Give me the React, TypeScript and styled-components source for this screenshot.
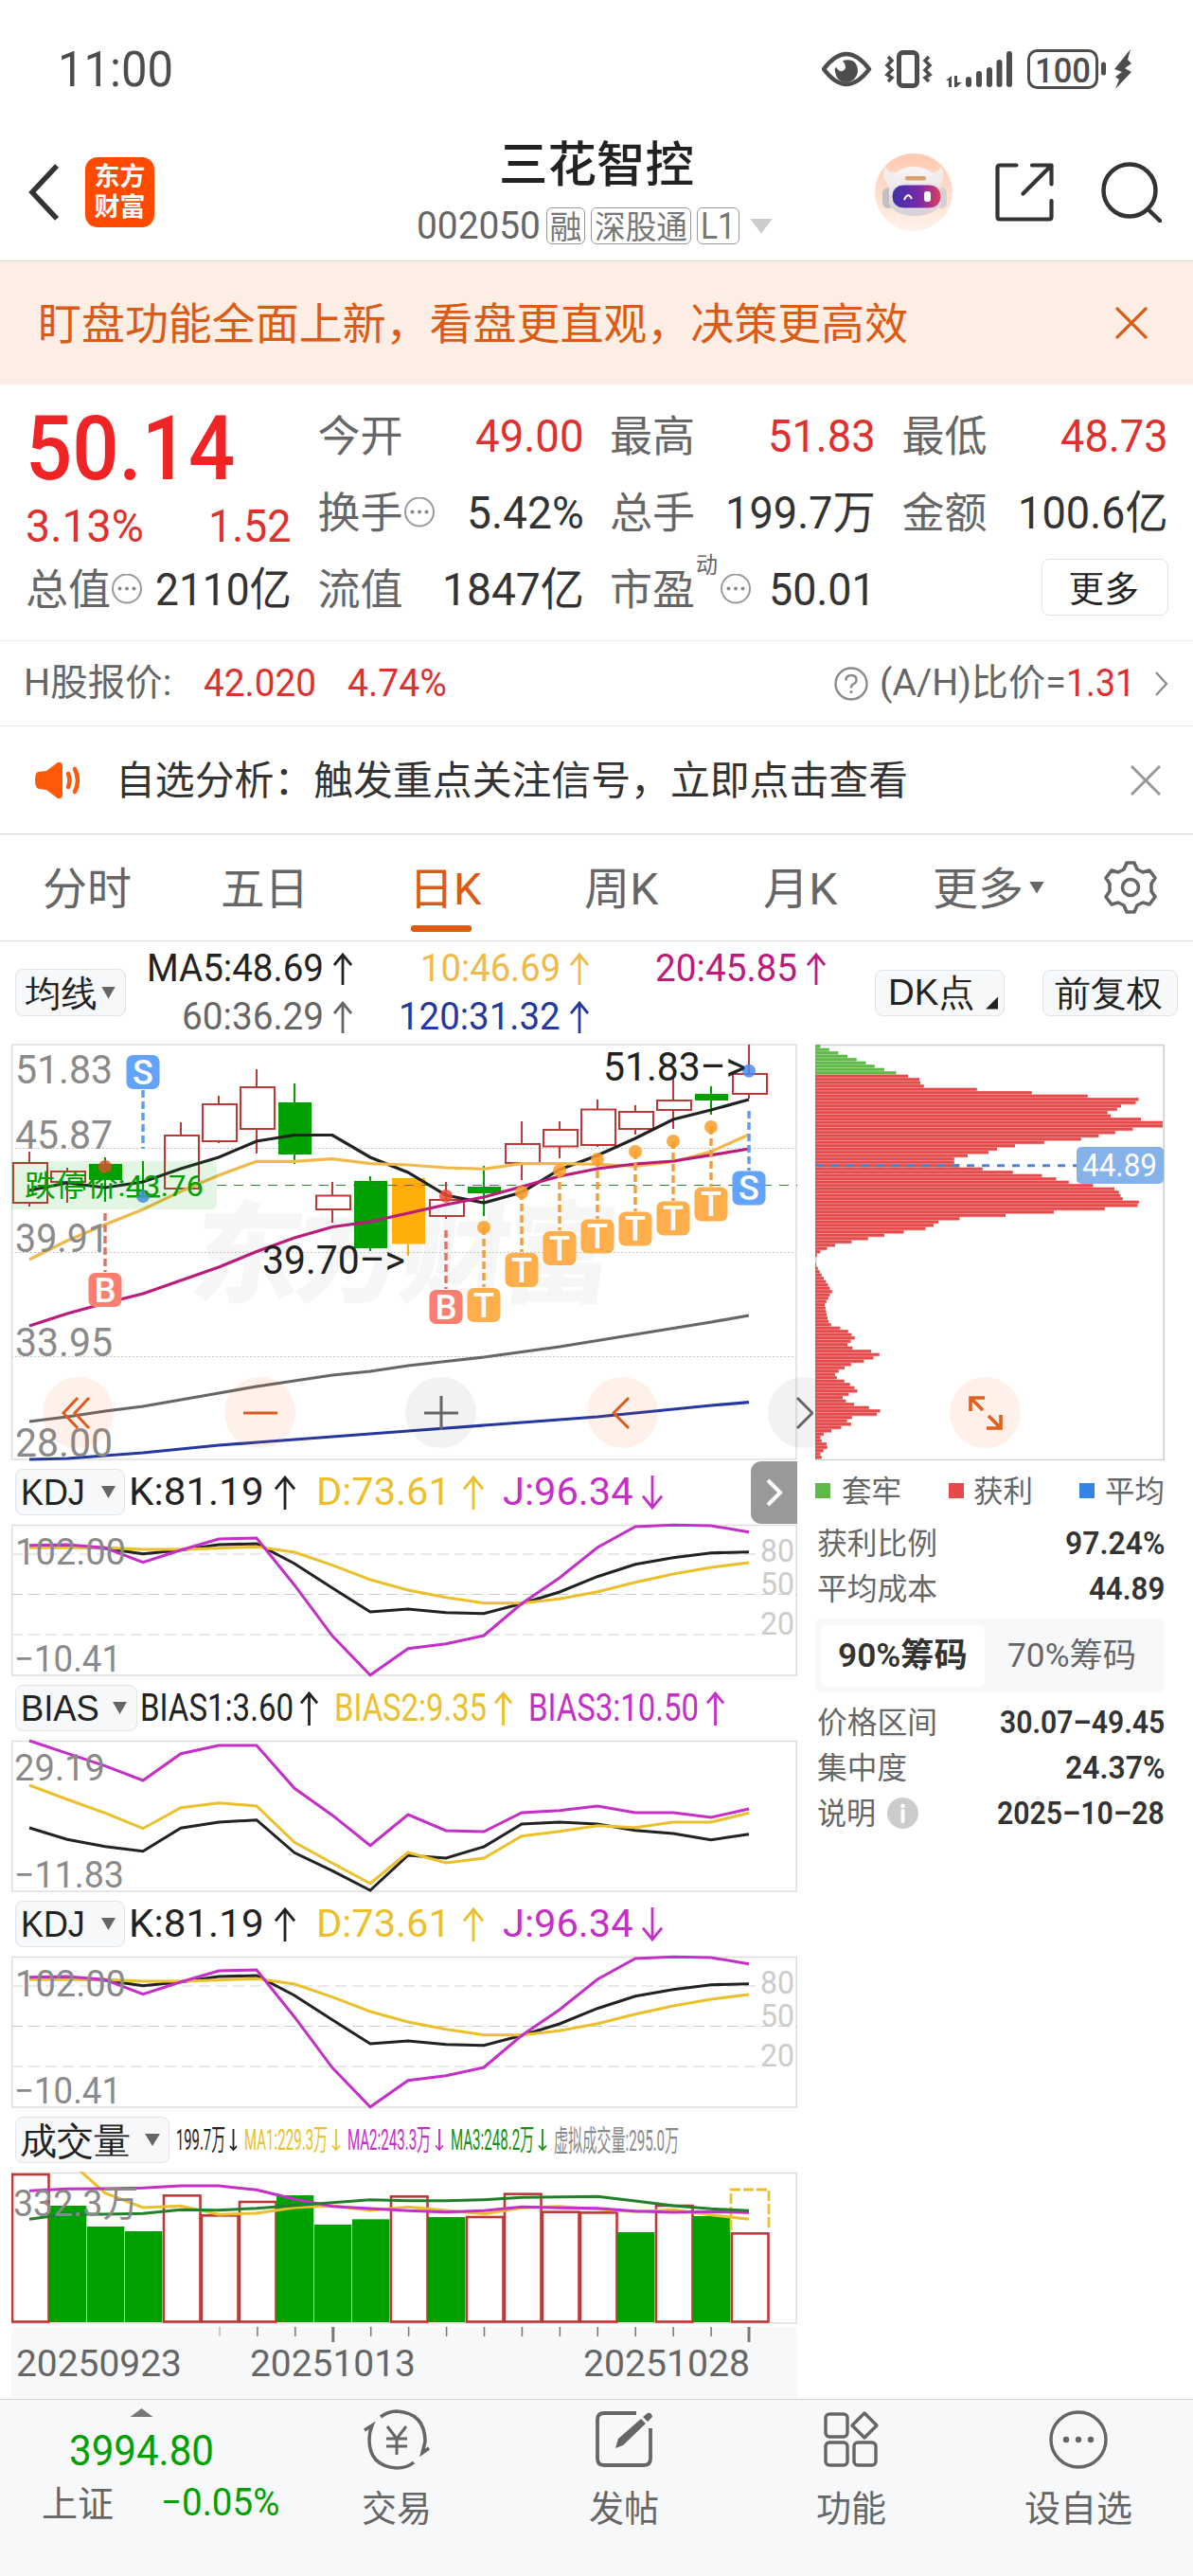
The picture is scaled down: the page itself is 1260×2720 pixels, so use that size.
// App.tsx
import React, { useLayoutEffect, useRef, useState } from 'react';
import styled, { createGlobalStyle } from 'styled-components';

const GlobalStyle = createGlobalStyle`
  body {
    margin: 0;
    background: #fff;
    font-family: Roboto, "Noto Sans CJK SC", sans-serif;
    color: #333;
  }

  svg {
    display: block;
    flex: none;
  }
`;

const RED = '#df3030';
const GREEN = '#00a000';
const ORANGE = '#dc5a14';
const GOLD = '#ebc02c';
const PURPLE = '#c42fc8';
const GRAY = '#666';

// ---------- text that is squeezed or stretched into a fixed width ----------

const FitBox = styled.span<{ $w: number; $s: number; $c?: string; $b?: number; $ml?: number }>`
  display: block;
  flex: none;
  width: ${(p) => p.$w}px;
  margin-left: ${(p) => p.$ml || 0}px;
  font-size: ${(p) => p.$s}px;
  font-weight: ${(p) => p.$b || 400};
  color: ${(p) => p.$c || '#333'};
  line-height: 1;
  white-space: nowrap;
`;

const FitInner = styled.span`
  display: inline-block;
  vertical-align: top;
  transform-origin: 0 50%;
`;

type FitProps = { w: number; s: number; c?: string; b?: number; ml?: number; children: string };

const Fit = ({ w, s, c, b, ml, children }: FitProps) => {
  const ref = useRef<HTMLSpanElement>(null);
  const [k, setK] = useState(1);
  // CJK glyphs sit a little higher on the Latin baseline
  const dy = /^[\u3000-\uffef]/.test(children) ? s * 0.03 : 0;

  useLayoutEffect(() => {
    if (ref.current) setK(w / ref.current.offsetWidth);
  }, [w, children]);

  return (
    <FitBox $w={w} $s={s} $c={c} $b={b} $ml={ml}>
      <FitInner ref={ref} style={{ transform: `translateY(${dy}px) scaleX(${k})` }}>{children}</FitInner>
    </FitBox>
  );
};

// ---------- layout ----------

const Page = styled.div`
  width: 1260px;
  height: 2720px;
  overflow: hidden;
  display: flex;
  flex-direction: column;
`;

const Row = styled.div<{ $h: number; $line?: string; $bg?: string }>`
  display: flex;
  flex: none;
  align-items: center;
  box-sizing: border-box;
  height: ${(p) => p.$h}px;
  background: ${(p) => p.$bg || 'transparent'};
  border-bottom: ${(p) => (p.$line ? `1px solid ${p.$line}` : 'none')};
`;

const StatusIcons = styled.div`
  display: flex;
  align-items: center;
  margin-left: 685px;
`;

const Header = styled(Row)`
  padding: 0 0 16px 30px;
`;

const Logo = styled.div`
  display: flex;
  flex-direction: column;
  align-items: center;
  justify-content: center;
  gap: 5px;
  width: 73px;
  height: 74px;
  margin-left: 28px;
  border-radius: 13px;
  background: #ff4a00;
`;

const TitleBlock = styled.div`
  display: flex;
  flex-direction: column;
  align-items: center;
  gap: 21px;
  width: 380px;
  margin: 0 104px 0 277px;
`;

const CodeRow = styled.div`
  display: flex;
  align-items: center;
  align-self: flex-start;
`;

const Tag = styled.span<{ $w: number }>`
  display: flex;
  align-items: center;
  justify-content: center;
  box-sizing: border-box;
  width: ${(p) => p.$w}px;
  height: 39px;
  margin-left: 6px;
  border: 1.5px solid #999;
  border-radius: 6px;
`;

const HeaderIcon = styled.div<{ $ml: number }>`
  margin-left: ${(p) => p.$ml}px;
`;

const Caret = styled.i<{ $w: number; $h: number; $c?: string; $ml?: number }>`
  width: ${(p) => p.$w}px;
  height: ${(p) => p.$h}px;
  margin-left: ${(p) => p.$ml || 0}px;
  background: ${(p) => p.$c || GRAY};
  clip-path: polygon(0 0, 100% 0, 50% 100%);
`;

const CaretUp = styled(Caret)`
  clip-path: polygon(50% 0, 100% 100%, 0 100%);
`;

const Quote = styled.div`
  display: grid;
  flex: none;
  box-sizing: border-box;
  height: 271px;
  padding: 14px 0 0 27px;
  grid-template-columns: repeat(4, 281px);
  grid-template-rows: repeat(3, 81px);
  column-gap: 27.5px;
  border-bottom: 1px solid #e9e9e9;
`;

const Price = styled.div`
  grid-row: span 2;
  padding-top: 6px;
`;

const Change = styled.div`
  display: flex;
  justify-content: space-between;
  margin-top: 11px;
`;

const Stat = styled.div`
  display: flex;
  align-items: center;
  justify-content: space-between;
`;

const StatLabel = styled.div`
  display: flex;
  align-items: center;
`;

const Superscript = styled.div`
  align-self: flex-start;
  margin: -16px 2px 0 1px;
`;

const MoreButton = styled.button`
  display: flex;
  align-items: center;
  justify-content: center;
  width: 134px;
  height: 60px;
  margin: 0 0 5px auto;
  border: 1.5px solid #e2e2e2;
  border-radius: 8px;
  background: #fff;
`;

const Tab = styled.div<{ $gap: number; $active?: boolean }>`
  position: relative;
  display: flex;
  align-items: center;
  height: 100%;
  margin-left: ${(p) => p.$gap}px;

  &::after {
    content: '';
    position: absolute;
    left: 2px;
    bottom: 9px;
    width: 64px;
    height: 7px;
    border-radius: 3px;
    background: ${(p) => (p.$active ? '#e05a10' : 'transparent')};
  }
`;

const PillButton = styled.button<{ $w: number; $h?: number }>`
  position: relative;
  display: flex;
  flex: none;
  align-items: center;
  box-sizing: border-box;
  width: ${(p) => p.$w}px;
  height: ${(p) => p.$h || 49}px;
  padding: 0;
  border: 1.5px solid #e1e4e8;
  border-radius: 8px;
  background: #f7f8fa;
`;

const Corner = styled.i`
  position: absolute;
  right: 6px;
  bottom: 6px;
  width: 13px;
  height: 13px;
  background: #222;
  clip-path: polygon(100% 0, 100% 100%, 0 100%);
`;

const MaGrid = styled.div`
  display: grid;
  grid-template-columns: 239px 250px 250px;
  grid-template-rows: 51px 51px;
  margin-right: 52px;
`;

const Value = styled.div<{ $ml?: number }>`
  display: flex;
  align-items: center;
  justify-content: flex-end;
  margin-left: ${(p) => p.$ml || 0}px;
`;

const Charts = styled.div`
  display: flex;
  flex: none;
  height: 1431px;
`;

const ChartColumn = styled.div`
  width: 830px;
  margin-left: 12px;
`;

const KLine = styled.div`
  position: relative;
  height: 440px;
`;

const RoundButton = styled.button<{ $x: number; $gray?: boolean }>`
  position: absolute;
  top: 352px;
  left: ${(p) => p.$x}px;
  display: flex;
  align-items: center;
  justify-content: center;
  width: 75px;
  height: 75px;
  padding: 0;
  border: none;
  border-radius: 50%;
  background: ${(p) => (p.$gray ? 'rgba(0,0,0,.05)' : 'rgba(255,90,10,.09)')};
`;

const IndicatorBar = styled.div`
  display: flex;
  align-items: center;
  height: 67px;
  padding-left: 4px;
`;

const FoldButton = styled.button`
  display: flex;
  align-items: center;
  justify-content: center;
  width: 49px;
  height: 66px;
  margin-left: auto;
  padding: 0;
  border: none;
  border-radius: 11px 0 0 11px;
  background: #999;
`;

const Axis = styled.div`
  height: 76px;
  margin-top: 3px;
  background: #f7f8fa;
`;

const ChipColumn = styled.div`
  position: relative;
  width: 369px;
  margin-left: 19px;
`;

const Legend = styled.div`
  display: flex;
  align-items: center;
  justify-content: space-between;
  height: 63px;
`;

const LegendItem = styled.div<{ $c: string }>`
  display: flex;
  align-items: center;

  &::before {
    content: '';
    width: 16px;
    height: 16px;
    background: ${(p) => p.$c};
  }
`;

const InfoRow = styled.div`
  display: flex;
  align-items: center;
  justify-content: space-between;
  height: 48px;
  padding-left: 2px;
`;

const InfoLabel = styled.div`
  display: flex;
  align-items: center;
  gap: 12px;
`;

const Toggle = styled.div`
  display: flex;
  align-items: center;
  box-sizing: border-box;
  height: 78px;
  margin: 8px 0 7px;
  padding: 0 6px;
  border-radius: 7px;
  background: #f7f8fa;
`;

const ToggleItem = styled.div<{ $active?: boolean }>`
  display: flex;
  align-items: center;
  justify-content: center;
  width: ${(p) => (p.$active ? 173 : 183)}px;
  height: 65px;
  border-radius: 6px;
  background: ${(p) => (p.$active ? '#fff' : 'transparent')};
`;

const BottomBar = styled.div`
  display: flex;
  flex: 1;
  border-top: 1px solid #d2d4d6;
  background: #f7f8fa;
`;

const IndexCell = styled.div`
  display: flex;
  flex-direction: column;
  align-items: center;
  width: 299px;
  padding-top: 9px;
`;

const IndexLine = styled.div<{ $mt: number; $ml?: number }>`
  display: flex;
  align-items: center;
  margin-top: ${(p) => p.$mt}px;
  margin-left: ${(p) => p.$ml || 0}px;
`;

const NavItem = styled.div`
  display: flex;
  flex-direction: column;
  align-items: center;
  gap: 21px;
  width: 240px;
  padding-top: 10px;
`;

// ---------- icons ----------

const Arrow = ({ c, w = 20, h = 34, down }: { c: string; w?: number; h?: number; down?: boolean }) => (
  <svg width={w} height={h} viewBox={`0 0 ${w} ${h}`} fill="none" stroke={c} strokeWidth={w < 14 ? 1.8 : 2.8}>
    <g transform={down ? `rotate(180 ${w / 2} ${h / 2})` : undefined}>
      <path d={`M${w / 2} ${h}V2M1 ${w * 0.65}L${w / 2} 2L${w - 1} ${w * 0.65}`} />
    </g>
  </svg>
);

const Cross = ({ c, s, sw }: { c: string; s: number; sw: number }) => (
  <svg width={s} height={s} viewBox={`0 0 ${s} ${s}`} stroke={c} strokeWidth={sw}>
    <path d={`M1 1L${s - 1} ${s - 1}M${s - 1} 1L1 ${s - 1}`} />
  </svg>
);

const Dots = () => (
  <svg width="34" height="34" viewBox="0 0 34 34">
    <circle cx="17" cy="15.500" r="15" fill="none" stroke="#999" strokeWidth="2" />
    <g fill="#888"><circle cx="9.500" cy="15.500" r="2" /><circle cx="17" cy="15.500" r="2" /><circle cx="24.500" cy="15.500" r="2" /></g>
  </svg>
);

const StatusSvg = () => (
  <svg width="330" height="46" viewBox="868 49 330 46" fill="none" stroke="#4d4d4d">
    <path d="M870 72Q894 40 918 72Q894 104 870 72Z" strokeWidth="4.5" strokeLinejoin="round" />
    <path d="M890 63Q899 61 903 65Q906 69 906 75Q904 85 894 86Q884 86 882 75Q881 71 883 70Q886 75 890 74Q896 71 890 63Z" fill="#4d4d4d" stroke="none" />
    <rect x="949.5" y="54.5" width="19" height="35" rx="4" strokeWidth="5" />
    <path d="M938 59L942 63L937 68L942 73L937 78L942 81L938 85M981 59L977 63L982 68L977 73L982 78L977 81L981 85" strokeWidth="3.500" />
    <path d="M999 84L1005 79V91H1002V84ZM1008 79H1011V86H1016L1010 91H1008Z" fill="#4d4d4d" stroke="none" />
    <path d="M1023 83V88M1034 77V88M1045 73V88M1055.500 65V88M1066 56V88" strokeWidth="6" strokeLinecap="round" />
    <rect x="1086.500" y="52.500" width="72" height="39" rx="9" strokeWidth="3" />
    <path d="M1165.500 67V76" strokeWidth="5" strokeLinecap="round" />
    <path d="M1194 51L1177 72L1185 75L1178 80L1182 83L1178 93L1195 75L1188 71L1195 66L1191 62Z" fill="#4d4d4d" stroke="none" />
    <text x="1093" y="86" fontSize="37" fontWeight="500" textLength="59" lengthAdjust="spacingAndGlyphs" fill="#4d4d4d" stroke="none">100</text>
  </svg>
);

const Robot = () => (
  <svg width="82" height="82" viewBox="0 0 82 82">
    <defs>
      <linearGradient id="halo" x2="0" y2="1"><stop offset="0" stopColor="#ffc9ae" /><stop offset="1" stopColor="#fff3ec" /></linearGradient>
      <linearGradient id="visor"><stop offset="0" stopColor="#3a34a8" /><stop offset=".55" stopColor="#7a28a8" /><stop offset="1" stopColor="#e0405c" /></linearGradient>
      <linearGradient id="shell" x2="0" y2="1"><stop offset="0" stopColor="#fbf7f6" /><stop offset="1" stopColor="#d6cfd4" /></linearGradient>
    </defs>
    <circle cx="41" cy="41" r="41" fill="url(#halo)" />
    <path d="M11 14Q6 26 15 34L25 20Q15 22 11 14ZM70 14Q76 26 67 34L56 20Q67 22 70 14Z" fill="#f2edec" />
    <rect x="8" y="36" width="12" height="22" rx="6" fill="#c4bfc4" />
    <rect x="65" y="36" width="11" height="22" rx="5" fill="#d6d0d3" />
    <path d="M15 38Q16 15 41 14Q66 15 69 38L70 52Q66 65 42 66Q18 65 15 52Z" fill="url(#shell)" />
    <rect x="32" y="24" width="22" height="4.500" rx="2" fill="#dba06c" />
    <rect x="18" y="33" width="52" height="25" rx="12" fill="url(#visor)" stroke="#e9dff0" strokeWidth="1" />
    <path d="M31 49Q35 40 39 48" fill="none" stroke="#fff" strokeWidth="2" />
    <rect x="52" y="40" width="7" height="11" rx="3" fill="#fff" />
  </svg>
);

const ShareIcon = () => (
  <svg width="62" height="62" viewBox="0 0 62 62" fill="none" stroke="#333" strokeWidth="4.200" strokeLinecap="round" strokeLinejoin="round">
    <path d="M22.500 2.500H5Q2.500 2.500 2.500 5V57Q2.500 59.500 5 59.500H57Q59.500 59.500 59.500 57V40" />
    <path d="M39 2.500H59.500V22.500M59 3L29.500 32.500" />
  </svg>
);

const SearchIcon = () => (
  <svg width="64" height="64" viewBox="0 0 64 64" fill="none" stroke="#333" strokeWidth="4.500" strokeLinecap="round">
    <circle cx="30" cy="30" r="27.500" />
    <path d="M49.500 50L62 62" />
  </svg>
);

const GearIcon = () => (
  <svg width="58" height="58" viewBox="0 0 58 58" fill="none" stroke={GRAY} strokeWidth="3.600" strokeLinejoin="round">
    <path d="M25 3H33L36 10L42 13L49 11L55 19L51 25V33L55 39L49 47L42 45L36 48L33 55H25L22 48L16 45L9 47L3 39L7 33V25L3 19L9 11L16 13L22 10Z" />
    <circle cx="29" cy="29" r="8.500" />
  </svg>
);

// ---------- chart data ----------

type Candle = [kind: 'up' | 'down' | 'mark', high: number, top: number, bottom: number, low: number];

const candles: Candle[] = [
  ['up', 1216, 1228, 1270, 1274], ['up', 1233, 1237, 1248, 1270], ['down', 1222, 1229, 1246, 1269],
  ['down', 1226, 1262, 1264.5, 1264], ['up', 1185, 1199, 1255, 1255], ['up', 1157, 1166, 1205, 1207],
  ['up', 1129, 1148, 1192, 1218], ['down', 1144, 1164, 1219, 1229], ['up', 1248, 1262.5, 1277, 1291],
  ['down', 1242, 1247, 1318, 1321], ['mark', 1244, 1244, 1313.5, 1326], ['up', 1248, 1267, 1284, 1287],
  ['down', 1231, 1253, 1260, 1284], ['up', 1184, 1208, 1228, 1246], ['up', 1184, 1193, 1210.5, 1223],
  ['up', 1161, 1171.5, 1209, 1211], ['up', 1167, 1174, 1192, 1198], ['up', 1137, 1162, 1172, 1192],
  ['down', 1147, 1155, 1162, 1177], ['up', 1103, 1134, 1155, 1160],
];

const ma5 = [1257, 1249, 1254, 1248, 1234, 1222, 1205, 1198.5, 1198.5, 1222, 1238, 1262, 1270, 1259, 1235, 1220, 1202, 1182, 1172, 1161];
const ma10 = [1330, 1310, 1293, 1277, 1258, 1241, 1226.3, 1226.3, 1223.7, 1228.7, 1230, 1233, 1234.3, 1228.7, 1228.7, 1229.3, 1231.5, 1226.7, 1216, 1198];
const ma20 = [1400, 1387, 1376, 1366, 1352, 1338, 1321.5, 1307, 1295.5, 1290, 1281, 1272, 1264, 1253, 1242, 1234, 1229, 1226, 1219.7, 1213];
const ma60 = [1501, 1496, 1490, 1485, 1478, 1471, 1464, 1458, 1452, 1448, 1442, 1437.5, 1433, 1427.5, 1422, 1415.5, 1409, 1402.5, 1396, 1389];
const ma120 = [1541, 1540, 1537, 1534, 1530, 1526, 1523, 1520, 1517, 1514, 1511, 1508, 1505, 1502, 1499, 1496, 1492, 1488, 1484, 1480.7];

const badges = [
  { i: 2, t: 'B', c: '#fa7f70', y: 1344, from: 1281, to: 1343, dot: 1232 },
  { i: 3, t: 'S', c: '#62a3fb', y: 1114, from: 1151, to: 1213, dot: 1263 },
  { i: 11, t: 'B', c: '#fa7f70', y: 1362, from: 1299, to: 1361, dot: 1263 },
  { i: 12, t: 'T', c: '#ffae4c', y: 1360, from: 1296, to: 1359, dot: 1296 },
  { i: 13, t: 'T', c: '#ffae4c', y: 1323, from: 1259, to: 1322, dot: 1259 },
  { i: 14, t: 'T', c: '#ffae4c', y: 1300, from: 1236, to: 1299, dot: 1236 },
  { i: 15, t: 'T', c: '#ffae4c', y: 1287.5, from: 1224, to: 1287, dot: 1224 },
  { i: 16, t: 'T', c: '#ffae4c', y: 1279.5, from: 1216, to: 1279, dot: 1216 },
  { i: 17, t: 'T', c: '#ffae4c', y: 1268.5, from: 1205, to: 1268, dot: 1205 },
  { i: 18, t: 'T', c: '#ffae4c', y: 1253.5, from: 1190, to: 1253, dot: 1190 },
  { i: 19, t: 'S', c: '#62a3fb', y: 1236.5, from: 1173, to: 1236, dot: 1130.7 },
];

// dash line colour, dot colour
const badgeInk: Record<string, [string, string]> = {
  B: ['#e07565', '#f04a32'],
  S: ['#5f9de8', '#4a8cf0'],
  T: ['#f0a040', '#fa9e28'],
};

// sub-chart series are kept in thirds of a pixel
const kdj = {
  k: [280, 279, 285, 302, 290, 273, 270, 333, 410, 486, 477, 488, 491, 460, 423, 374, 335, 314, 299, 296],
  d: [283, 283, 283, 288, 288, 284, 280, 297, 338, 384, 417, 440, 458, 458, 445, 422, 392, 366, 345, 330],
  j: [275, 273, 283, 329, 290, 255, 252, 401, 562, 686, 602, 587, 561, 460, 378, 282, 216, 211, 213, 233],
};

const bias = {
  k: [1170, 1207, 1229, 1244, 1171, 1152, 1145, 1249, 1306, 1368, 1257, 1266, 1230, 1158, 1152, 1158, 1178, 1188, 1208, 1190],
  d: [1035, 1080, 1123, 1172, 1106, 1091, 1101, 1216, 1282, 1346, 1248, 1281, 1266, 1196, 1181, 1163, 1169, 1152, 1152, 1123],
  j: [894, 934, 974, 1020, 935, 909, 909, 1045, 1130, 1226, 1128, 1179, 1182, 1122, 1115, 1101, 1122, 1122, 1137, 1110],
};

const volumes = [195, 297, 363, 378, 262, 325, 282, 264, 357, 340, 265, 333, 330, 257, 314, 316, 381, 294, 330, 382];
const volumeDown = [1, 2, 3, 7, 8, 9, 11, 16, 18];
const volMa1 = [60, 150, 257, 303, 298, 325, 321, 303, 297, 312, 301, 312, 323, 304, 299, 308, 316, 310, 326, 340];
const volMa2 = [250, 244, 243, 241, 234, 234, 247, 276, 299, 306, 313, 317, 313, 301, 304, 305, 314, 318, 316, 319];
const volMa3 = [340, 323, 324, 322, 310, 311, 305, 296, 287, 278, 281, 281, 278, 271, 269, 268, 282, 297, 307, 313];

const chips = [
  16, 44, 73, 102, 131, 160, 188, 219, 256, 294, 330, 333, 344, 512, 686, 863, 1024, 1015, 969, 956, 926, 936, 1032, 1101, 1101,
  1006, 950, 898, 842, 725, 633, 576, 549, 483, 440, 440, 457, 530, 626, 718, 763, 803, 880, 948, 962, 967, 974, 1025, 1021, 917,
  756, 603, 457, 390, 375, 349, 280, 219, 167, 115, 63, 37, 16, 5, 0, 0, 3, 8, 14, 20, 27, 34, 40, 46, 53, 46, 41, 35, 30, 32, 34,
  36, 39, 42, 50, 79, 104, 115, 125, 112, 102, 118, 177, 203, 184, 154, 113, 93, 74, 63, 68, 92, 110, 124, 133, 106, 87, 97, 123,
  170, 205, 195, 116, 100, 113, 82, 51, 27, 16, 20, 36, 38, 26, 16, 20,
];

const line = (ys: number[], x0: number, k = 1, dy = 0) =>
  ys.map((y, i) => `${x0 + i * 40},${(y * k + dy).toFixed(1)}`).join(' ');

type LabelProps = { x: number; y: number; w: number; s: number; c?: string; children: string };

const Label = ({ x, y, w, s, c = '#8a8a8a', children }: LabelProps) => (
  <text x={x} y={y} fontSize={s} fill={c} stroke="none" textLength={w} lengthAdjust="spacingAndGlyphs">{children}</text>
);

// ---------- charts ----------

const candleColor = { up: '#bb3a38', down: GREEN, mark: '#ffae0a' };

const KLineChart = () => (
  <svg width="830" height="440" viewBox="12 1102 830 440" fill="none" overflow="visible">
    <g transform="skewX(-8)" fill="#f6f6f6" fontFamily="'Noto Sans CJK SC'" fontWeight="900" fontSize="116">
      <text x="390" y="1366" textLength="446">东方财富</text>
    </g>
    <g stroke="#c4c4c4" strokeWidth="1" strokeDasharray="2 2">
      <path d="M12 1212.500H842M12 1322.500H842M12 1432.500H842" />
    </g>
    <rect x="12.500" y="1103" width="828.500" height="438" stroke="#dedede" strokeWidth="1.500" />
    {candles.map(([kind, high, top, bottom, low], i) => {
      const x = 31 + i * 40;
      const color = candleColor[kind];
      return (
        <g key={i} stroke={color} strokeWidth="2">
          <path d={`M${x} ${high}V${top}M${x} ${bottom}V${low}`} />
          {kind === 'up'
            ? <rect x={x - 17} y={top} width="36" height={bottom - top} />
            : <rect x={x - 17} y={top} width="35" height={bottom - top} fill={color} stroke="none" />}
        </g>
      );
    })}
    <path d="M229 1251.500H842" stroke="#2c8c34" strokeWidth="1.200" strokeDasharray="10 8" />
    <g strokeWidth="3.200">
      <polyline points={line(ma120, 31)} stroke="#2438a0" />
      <polyline points={line(ma60, 31)} stroke="#666" />
      <polyline points={line(ma5, 31)} stroke="#222" />
      <polyline points={line(ma10, 31)} stroke="#f0b94c" />
      <polyline points={line(ma20, 31)} stroke="#bb1b7b" />
    </g>
    {badges.map((b) => {
      const x = 31 + b.i * 40;
      return (
        <g key={b.i}>
          <path d={`M${x} ${b.from}V${b.to}`} stroke={badgeInk[b.t][0]} strokeWidth="3.500" strokeDasharray="8 4" />
          <circle cx={x} cy={b.dot} r="7" fill={badgeInk[b.t][1]} fillOpacity=".85" />
          <rect x={x - 17.5} y={b.y} width="35" height="36" rx="7" fill={b.c} />
          <text x={x} y={b.y + 30.5} fontSize="36" fontWeight="500" fill="#fff" textAnchor="middle">{b.t}</text>
        </g>
      );
    })}
    <path d="M12 1226H223Q229 1226 229 1232V1271Q229 1277 223 1277H12Z" fill="#00a000" fillOpacity=".11" />
    <Label x={26} y={1262.5} w={189} s={31} c={GREEN}>跌停价:43.76</Label>
    <Label x={16} y={1144} w={103} s={43}>51.83</Label>
    <Label x={16} y={1213} w={103} s={43}>45.87</Label>
    <Label x={16} y={1321.5} w={99} s={43}>39.91</Label>
    <Label x={16} y={1432} w={103} s={43}>33.95</Label>
    <Label x={16} y={1538} w={103} s={43}>28.00</Label>
    <Label x={277} y={1345} w={151} s={43} c="#222">39.70–&gt;</Label>
    <Label x={637} y={1141} w={151} s={43} c="#222">51.83–&gt;</Label>
  </svg>
);

const ChipChart = () => (
  <svg width="369" height="440" viewBox="0 0 369 440">
    <rect x=".75" y="1.500" width="367.500" height="438" fill="none" stroke="#ccc" strokeWidth="1.500" />
    {chips.map((v, i) => (
      <g key={i} fill={i < 9 ? '#5fb946' : '#e64a4a'}>
        <rect x="0" y={1.3 + i * 3.5} width={v / 3} height="3.500" fillOpacity=".6" />
        <rect x="0" y={1.3 + i * 3.5} width={v / 3} height="2.700" />
      </g>
    ))}
    <path d="M0 128.700H276" stroke="#4a86d0" strokeWidth="3" strokeDasharray="8 8" />
    <rect x="276" y="109" width="92" height="39" rx="5" fill="#86b2ea" />
    <Label x={282} y={140} w={79} s={34} c="#fff">44.89</Label>
  </svg>
);

const SubFrame = () => <rect x=".75" y="1.500" width="828.500" height="158.500" fill="none" stroke="#dedede" strokeWidth="1.500" />;

type Series = { k: number[]; d: number[]; j: number[] };

const SubLines = ({ data, dy }: { data: Series; dy: number }) => (
  <g fill="none" strokeWidth="3">
    <polyline points={line(data.k, 19, 1 / 3, dy)} stroke="#222" />
    <polyline points={line(data.d, 19, 1 / 3, dy)} stroke={GOLD} />
    <polyline points={line(data.j, 19, 1 / 3, dy)} stroke={PURPLE} />
  </g>
);

const KdjChart = () => (
  <svg width="830" height="161" viewBox="0 0 830 161" overflow="visible">
    <SubFrame />
    <g strokeWidth="1.500" strokeDasharray="12 6">
      <path d="M0 32H789M0 117H789" stroke="#e2e2e2" />
      <path d="M0 74.500H830" stroke="#ccc" strokeWidth="1" />
    </g>
    <Label x={791} y={39.5} w={36} s={33} c="#ccc">80</Label>
    <Label x={791} y={74.5} w={36} s={33} c="#ccc">50</Label>
    <Label x={791} y={116.5} w={36} s={33} c="#ccc">20</Label>
    <SubLines data={kdj} dy={-69} />
    <Label x={4} y={42.5} w={117} s={39}>102.00</Label>
    <Label x={3} y={155.5} w={113} s={39}>−10.41</Label>
  </svg>
);

const BiasChart = () => (
  <svg width="830" height="161" viewBox="0 0 830 161" overflow="visible">
    <SubFrame />
    <SubLines data={bias} dy={-297} />
    <Label x={3} y={42.5} w={96} s={39}>29.19</Label>
    <Label x={3} y={155.5} w={116} s={39}>−11.83</Label>
  </svg>
);

const VolumeChart = () => (
  <svg width="830" height="161" viewBox="0 0 830 161" fill="none">
    <SubFrame />
    {volumes.map((v, i) => {
      const y = v / 3 - 63;
      return volumeDown.includes(i)
        ? <rect key={i} x={i * 40} y={y} width="39.300" height={159 - y} fill={GREEN} />
        : <rect key={i} x={i * 40 + 1} y={y + 1} width="38.500" height={157.5 - y} stroke="#bb3a38" strokeWidth="2.600" />;
    })}
    <path d="M760 62V19H800V62" stroke={GOLD} strokeWidth="2.800" strokeDasharray="11 3" />
    <g strokeWidth="3">
      <polyline points={line(volMa1, 19, 1 / 3, -63)} stroke={GOLD} />
      <polyline points={line(volMa2, 19, 1 / 3, -63)} stroke={PURPLE} />
      <polyline points={line(volMa3, 19, 1 / 3, -63)} stroke="#23802a" />
    </g>
    <Label x={2} y={47} w={132} s={39}>332.3万</Label>
  </svg>
);

const AxisTicks = () => (
  <svg width="830" height="76" viewBox="0 0 830 76">
    {Array.from({ length: 15 }, (_, n) => {
      const big = n === 3 || n === 14;
      const x = 220 + n * 39.93;
      return <path key={n} d={`M${x} 0V${big ? 16 : 10}`} stroke={n ? '#777' : '#bbb'} strokeWidth={big ? 3 : 1.5} />;
    })}
    <Label x={5} y={51.5} w={175} s={39} c={GRAY}>20250923</Label>
    <Label x={252} y={51.5} w={175} s={39} c={GRAY}>20251013</Label>
    <Label x={604} y={51.5} w={176} s={39} c={GRAY}>20251028</Label>
  </svg>
);

const KdjBar = ({ fold }: { fold?: boolean }) => (
  <IndicatorBar>
    <PillButton $w={116}>
      <Fit w={68} s={39} ml={5} c="#222">KDJ</Fit>
      <Caret $w={15} $h={13} $ml={17} />
    </PillButton>
    <Fit w={143} s={41} ml={4} c="#222">K:81.19</Fit>
    <Value $ml={11}><Arrow c="#222" w={22} h={36} /></Value>
    <Fit w={142} s={41} ml={22} c={GOLD}>D:73.61</Fit>
    <Value $ml={13}><Arrow c={GOLD} w={22} h={36} /></Value>
    <Fit w={138} s={41} ml={20} c={PURPLE}>J:96.34</Fit>
    <Value $ml={9}><Arrow c={PURPLE} w={22} h={36} down /></Value>
    {fold && (
      <FoldButton>
        <svg width="18" height="30" viewBox="0 0 18 30" fill="none" stroke="#fff" strokeWidth="4"><path d="M2 2L15 15L2 28" /></svg>
      </FoldButton>
    )}
  </IndicatorBar>
);

const volumeItems = [
  { t: '199.7万', c: '#222', w: 52, ml: 7, aw: 9 },
  { t: 'MA1:229.3万', c: GOLD, w: 88, ml: 7, aw: 10 },
  { t: 'MA2:243.3万', c: PURPLE, w: 88, ml: 7, aw: 10 },
  { t: 'MA3:248.2万', c: '#159015', w: 88, ml: 7, aw: 10 },
];

const maItems = [
  { t: 'MA5:48.69', c: '#222', w: 187 },
  { t: '10:46.69', c: '#f0b94c', w: 148 },
  { t: '20:45.85', c: '#bb1b7b', w: 150 },
  { t: '60:36.29', c: '#666', w: 150 },
  { t: '120:31.32', c: '#2438a0', w: 171 },
];

const chipInfo: [string, number, string, number][] = [
  ['获利比例', 127, '97.24%', 105],
  ['平均成本', 127, '44.89', 80],
  ['价格区间', 127, '30.07–49.45', 174],
  ['集中度', 95, '24.37%', 105],
  ['说明', 62, '2025–10–28', 177],
];

const ChipInfoRow = ({ index }: { index: number }) => {
  const [name, nw, value, vw] = chipInfo[index];
  return (
    <InfoRow>
      <InfoLabel>
        <Fit w={nw} s={32} c={GRAY}>{name}</Fit>
        {name === '说明' && (
          <svg width="33" height="33" viewBox="0 0 33 33">
            <circle cx="16.500" cy="16.500" r="16.500" fill="#ccc" />
            <path d="M16.500 14V25" stroke="#fff" strokeWidth="4" strokeLinecap="round" />
            <circle cx="16.500" cy="9" r="2.300" fill="#fff" />
          </svg>
        )}
      </InfoLabel>
      <Fit w={vw} s={34} b={600}>{value}</Fit>
    </InfoRow>
  );
};

const App = () => {
  return (
    <Page>
      <GlobalStyle />
      <Row $h={146}>
        <Fit w={122} s={51} ml={61} c="#4d4d4d">11:00</Fit>
        <StatusIcons><StatusSvg /></StatusIcons>
      </Row>

      <Header $h={130} $line="#d4d6d8">
        <svg width="32" height="60" viewBox="0 0 32 60" fill="none" stroke="#333" strokeWidth="5.500"><path d="M30 2L4 30L30 58" /></svg>
        <Logo>
          <Fit w={54} s={27} b={700} c="#fff">东方</Fit>
          <Fit w={54} s={27} b={700} c="#fff">财富</Fit>
        </Logo>
        <TitleBlock>
          <Fit w={206} s={51} c="#222" b={500}>三花智控</Fit>
          <CodeRow>
            <Fit w={131} s={40} c={GRAY}>002050</Fit>
            <Tag $w={41}><Fit w={34} s={34} c="#777">融</Fit></Tag>
            <Tag $w={106}><Fit w={98} s={34} c="#777">深股通</Fit></Tag>
            <Tag $w={45}><Fit w={37} s={38} c="#777">L1</Fit></Tag>
            <Caret $w={24} $h={16} $c="#ccc" $ml={11} />
          </CodeRow>
        </TitleBlock>
        <Robot />
        <HeaderIcon $ml={45}><ShareIcon /></HeaderIcon>
        <HeaderIcon $ml={50}><SearchIcon /></HeaderIcon>
      </Header>

      <Row $h={130} $bg="#fceee5">
        <Fit w={919} s={46} ml={40} c={ORANGE}>盯盘功能全面上新，看盘更直观，决策更高效</Fit>
        <Value $ml={219}><Cross c={ORANGE} s={34} sw={3.2} /></Value>
      </Row>

      <Quote>
        <Price>
          <Fit w={221} s={95} b={500} c="#f02424">50.14</Fit>
          <Change>
            <Fit w={125} s={48} c={RED}>3.13%</Fit>
            <Fit w={88} s={48} c={RED}>1.52</Fit>
          </Change>
        </Price>
        <Stat><Fit w={90} s={45} c={GRAY}>今开</Fit><Fit w={115} s={48} c={RED}>49.00</Fit></Stat>
        <Stat><Fit w={90} s={45} c={GRAY}>最高</Fit><Fit w={114} s={48} c={RED}>51.83</Fit></Stat>
        <Stat><Fit w={90} s={45} c={GRAY}>最低</Fit><Fit w={114} s={48} c={RED}>48.73</Fit></Stat>
        <Stat><StatLabel><Fit w={90} s={45} c={GRAY}>换手</Fit><Dots /></StatLabel><Fit w={124} s={48}>5.42%</Fit></Stat>
        <Stat><Fit w={90} s={45} c={GRAY}>总手</Fit><Fit w={159} s={48}>199.7万</Fit></Stat>
        <Stat><Fit w={90} s={45} c={GRAY}>金额</Fit><Fit w={159} s={48}>100.6亿</Fit></Stat>
        <Stat><StatLabel><Fit w={90} s={45} c={GRAY}>总值</Fit><Dots /></StatLabel><Fit w={144} s={48}>2110亿</Fit></Stat>
        <Stat><Fit w={90} s={45} c={GRAY}>流值</Fit><Fit w={150} s={48}>1847亿</Fit></Stat>
        <Stat>
          <StatLabel>
            <Fit w={90} s={45} c={GRAY}>市盈</Fit>
            <Superscript><Fit w={23} s={24} c={GRAY}>动</Fit></Superscript>
            <Dots />
          </StatLabel>
          <Fit w={113} s={48}>50.01</Fit>
        </Stat>
        <Stat><MoreButton><Fit w={75} s={38} c="#222">更多</Fit></MoreButton></Stat>
      </Quote>

      <Row $h={90} $line="#e9e9e9">
        <Fit w={156} s={39} ml={25} c={GRAY}>H股报价:</Fit>
        <Fit w={119} s={41} ml={34} c={RED}>42.020</Fit>
        <Fit w={105} s={41} ml={33} c={RED}>4.74%</Fit>
        <Value $ml={409}>
          <svg width="36" height="36" viewBox="0 0 36 36" fill="none" stroke="#8a8a8a" strokeWidth="2.400">
            <circle cx="18" cy="18" r="16.500" />
            <path d="M12.500 14.500Q12.500 9 18 9Q23.500 9 23.500 14Q23.500 17 20 18.500Q18 19.500 18 22.500" />
            <circle cx="18" cy="26.500" r="1.600" fill="#8a8a8a" stroke="none" />
          </svg>
        </Value>
        <Fit w={197} s={39} ml={12} c={GRAY}>(A/H)比价=</Fit>
        <Fit w={73} s={41} c={RED}>1.31</Fit>
        <Value $ml={21}>
          <svg width="14" height="26" viewBox="0 0 14 26" fill="none" stroke="#888" strokeWidth="2.200"><path d="M1 1L12 13L1 25" /></svg>
        </Value>
      </Row>

      <Row $h={114} $line="#d8d8d8">
        <Value $ml={37}>
          <svg width="49" height="40" viewBox="0 0 49 40" fill="none" stroke="#ff5a08" strokeWidth="4.500" strokeLinecap="round">
            <path d="M3 11Q0 12 0 20Q0 28 4 29L12 30L24 39Q28 40 29 36V4Q28 0 24 1L12 10Z" fill="#ff5a08" stroke="none" />
            <path d="M35 13Q38 20 35 27" />
            <path d="M42 8Q48 20 42 32" />
          </svg>
        </Value>
        <Fit w={837} s={42} ml={36}>自选分析：触发重点关注信号，立即点击查看</Fit>
        <Value $ml={235}><Cross c="#999" s={32} sw={3} /></Value>
      </Row>

      <Row $h={113} $line="#d8d8d8">
        <Tab $gap={45}><Fit w={94} s={47} c={GRAY}>分时</Fit></Tab>
        <Tab $gap={94}><Fit w={93} s={47} c={GRAY}>五日</Fit></Tab>
        <Tab $gap={106} $active><Fit w={77} s={47} c={ORANGE}>日K</Fit></Tab>
        <Tab $gap={108}><Fit w={79} s={47} c={GRAY}>周K</Fit></Tab>
        <Tab $gap={110}><Fit w={79} s={47} c={GRAY}>月K</Fit></Tab>
        <Tab $gap={100}><Fit w={96} s={47} c={GRAY}>更多</Fit><Caret $w={16} $h={13} $ml={6} /></Tab>
        <Value $ml={62}><GearIcon /></Value>
      </Row>

      <Row $h={108}>
        <Value $ml={16}>
          <PillButton $w={117} $h={50}><Fit w={75} s={38} ml={10} c="#222">均线</Fit><Caret $w={15} $h={13} $ml={5} /></PillButton>
        </Value>
        <MaGrid>
          {maItems.map((m) => (
            <Value key={m.t}><Fit w={m.w} s={40} c={m.c}>{m.t}</Fit><Value $ml={10}><Arrow c={m.c} /></Value></Value>
          ))}
        </MaGrid>
        <PillButton $w={137}><Fit w={92} s={38} ml={12} c="#222">DK点</Fit><Corner /></PillButton>
        <Value $ml={40}><PillButton $w={143}><Fit w={114} s={38} ml={12} c="#222">前复权</Fit></PillButton></Value>
      </Row>

      <Charts>
        <ChartColumn>
          <KLine>
            <KLineChart />
            <RoundButton $x={33}>
              <svg width="38" height="36" viewBox="0 0 38 36" fill="none" stroke="#d95c1c" strokeWidth="3"><path d="M18 2L3 18L18 34M30 2L15 18L30 34" /></svg>
            </RoundButton>
            <RoundButton $x={225}>
              <svg width="36" height="4" viewBox="0 0 36 4" stroke="#d95c1c" strokeWidth="3"><path d="M0 2H36" /></svg>
            </RoundButton>
            <RoundButton $x={416} $gray>
              <svg width="36" height="36" viewBox="0 0 36 36" stroke={GRAY} strokeWidth="3"><path d="M0 18H36M18 0V36" /></svg>
            </RoundButton>
            <RoundButton $x={608}>
              <svg width="24" height="36" viewBox="0 0 24 36" fill="none" stroke="#d95c1c" strokeWidth="3"><path d="M18 2L2 18L18 34" /></svg>
            </RoundButton>
            <RoundButton $x={799} $gray>
              <svg width="20" height="36" viewBox="-1 0 20 36" fill="none" stroke={GRAY} strokeWidth="3"><path d="M2 2L18 18L2 34" /></svg>
            </RoundButton>
          </KLine>
          <KdjBar fold />
          <KdjChart />
          <IndicatorBar>
            <PillButton $w={129}>
              <Fit w={83} s={39} ml={5} c="#222">BIAS</Fit>
              <Caret $w={15} $h={13} $ml={14} />
            </PillButton>
            <Fit w={162} s={41} ml={3} c="#222">BIAS1:3.60</Fit>
            <Value $ml={7}><Arrow c="#222" w={19} h={36} /></Value>
            <Fit w={161} s={41} ml={17} c={GOLD}>BIAS2:9.35</Fit>
            <Value $ml={8}><Arrow c={GOLD} w={19} h={36} /></Value>
            <Fit w={180} s={41} ml={17} c={PURPLE}>BIAS3:10.50</Fit>
            <Value $ml={8}><Arrow c={PURPLE} w={19} h={36} /></Value>
          </IndicatorBar>
          <BiasChart />
          <KdjBar />
          <KdjChart />
          <IndicatorBar>
            <PillButton $w={163}>
              <Fit w={117} s={39} ml={4} c="#222">成交量</Fit>
              <Caret $w={16} $h={13} $ml={15} />
            </PillButton>
            {volumeItems.map((v) => (
              <React.Fragment key={v.t}>
                <Fit w={v.w} s={31} ml={v.ml} c={v.c}>{v.t}</Fit>
                <Value $ml={4}><Arrow c={v.c} w={v.aw} h={24} down /></Value>
              </React.Fragment>
            ))}
            <Fit w={132} s={31} ml={7} c="#8a8a8a">虚拟成交量:295.0万</Fit>
          </IndicatorBar>
          <VolumeChart />
          <Axis><AxisTicks /></Axis>
        </ChartColumn>

        <ChipColumn>
          <ChipChart />
          <RoundButton $x={142}>
            <svg width="38" height="38" viewBox="0 0 38 38" fill="none" stroke="#e0601c" strokeWidth="3.600"><path d="M3 17V3H18M3 3L16 16M35 21V35H20M35 35L22 22" /></svg>
          </RoundButton>
          <Legend>
            <LegendItem $c="#5fb946"><Fit w={63} s={32} ml={12} c={GRAY}>套牢</Fit></LegendItem>
            <LegendItem $c="#e64a4a"><Fit w={63} s={32} ml={10} c={GRAY}>获利</Fit></LegendItem>
            <LegendItem $c="#3583e2"><Fit w={63} s={32} ml={11} c={GRAY}>平均</Fit></LegendItem>
          </Legend>
          <ChipInfoRow index={0} />
          <ChipInfoRow index={1} />
          <Toggle>
            <ToggleItem $active><Fit w={137} s={35} b={600}>90%筹码</Fit></ToggleItem>
            <ToggleItem><Fit w={136} s={35} c={GRAY}>70%筹码</Fit></ToggleItem>
          </Toggle>
          <ChipInfoRow index={2} />
          <ChipInfoRow index={3} />
          <ChipInfoRow index={4} />
        </ChipColumn>
      </Charts>

      <BottomBar>
        <IndexCell>
          <CaretUp $w={24} $h={9} $c="#777" />
          <IndexLine $mt={14}><Fit w={153} s={44} c={GREEN}>3994.80</Fit></IndexLine>
          <IndexLine $mt={12} $ml={40}>
            <Fit w={76} s={38} c={GRAY}>上证</Fit>
            <Fit w={125} s={41} ml={50} c={GREEN}>−0.05%</Fit>
          </IndexLine>
        </IndexCell>
        <NavItem>
          <svg width="72" height="64" viewBox="383 2544 72 64" fill="none" stroke={GRAY} strokeWidth="3.500">
            <path d="M402 2552Q410 2546 419 2546Q449 2548 449 2578L446 2590L453 2585" />
            <path d="M437 2600Q430 2606 419 2606Q390 2604 390 2576Q390 2568 393 2561L385 2566" />
            <path d="M409 2562L419 2575L429 2562M419 2575V2592M408 2575H430M408 2583H430" strokeWidth="3" />
          </svg>
          <Fit w={74} s={38} c={GRAY}>交易</Fit>
        </NavItem>
        <NavItem>
          <svg width="64" height="64" viewBox="627 2544 64 64" fill="none" stroke={GRAY} strokeWidth="3.800">
            <path d="M672 2548H638Q631 2548 631 2555V2596Q631 2603 638 2603H680Q687 2603 687 2596V2564" />
            <path d="M650 2585L653 2575L677 2554L682 2559L658 2582ZM679 2552L684 2548Q688 2547 689 2552L684 2557Z" fill={GRAY} stroke="none" />
          </svg>
          <Fit w={74} s={38} c={GRAY}>发帖</Fit>
        </NavItem>
        <NavItem>
          <svg width="64" height="64" viewBox="868 2544 64 64" fill="none" stroke={GRAY} strokeWidth="3.400" strokeLinejoin="round">
            <rect x="873" y="2549" width="23" height="24" rx="4" />
            <rect x="873" y="2579" width="23" height="24" rx="4" />
            <rect x="903" y="2579" width="23" height="24" rx="4" />
            <path d="M914 2548L927 2561L914 2574L901 2561Z" />
          </svg>
          <Fit w={74} s={38} c={GRAY}>功能</Fit>
        </NavItem>
        <NavItem>
          <svg width="64" height="64" viewBox="0 0 64 64">
            <circle cx="32" cy="32" r="29" fill="none" stroke={GRAY} strokeWidth="3.400" />
            <g fill={GRAY}><circle cx="19" cy="32" r="3.200" /><circle cx="32" cy="32" r="3.200" /><circle cx="45" cy="32" r="3.200" /></g>
          </svg>
          <Fit w={114} s={38} c={GRAY}>设自选</Fit>
        </NavItem>
      </BottomBar>
    </Page>
  );
};

export default App;
